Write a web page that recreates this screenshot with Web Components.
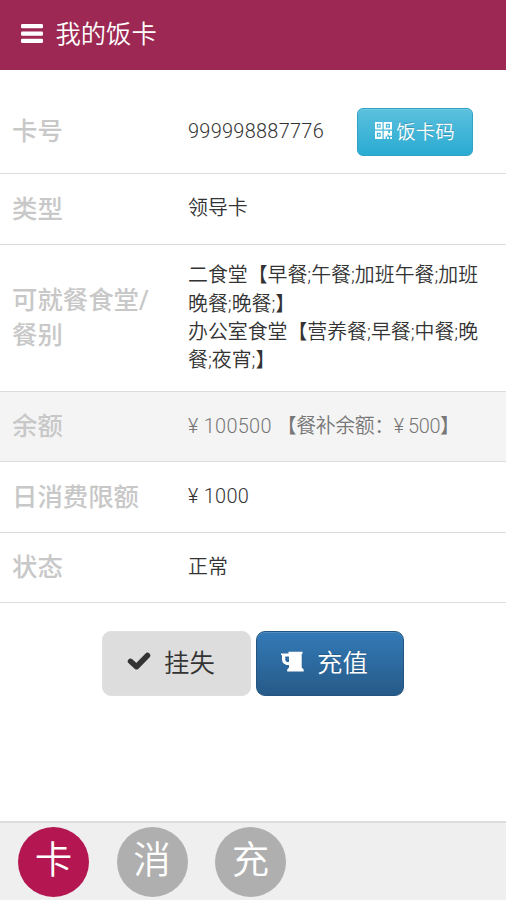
<!DOCTYPE html>
<html lang="zh-CN"><head><meta charset="utf-8"><title>我的饭卡</title>
<style>
html,body{margin:0;height:100%}
body{background:#fff;font-family:Roboto,"Noto Sans CJK SC",sans-serif;font-weight:350;color:#333}
.num{letter-spacing:.3px}
</style></head><body>
<meal-app>
<app-header slot="header">我的饭卡</app-header>
<info-row label="卡号" style="--h:104px;--pt:20px;--vt:2px"><span class="num">999998887776</span><code-button slot="action">饭卡码</code-button></info-row>
<info-row label="类型" style="--h:71px;--vt:1px">领导卡</info-row>
<info-row label="可就餐食堂/<br>餐别" style="--h:147px;--vt:2px">二食堂【早餐;午餐;加班午餐;加班<br>晚餐;晚餐;】<br>办公室食堂【营养餐;早餐;中餐;晚<br>餐;夜宵;】</info-row>
<info-row label="余额" style="--h:70px;--bg:#f4f4f4;--fg:#777"><span class="num">¥ 100500 </span><span style="letter-spacing:-.4px">【餐补余额：¥ 500】</span></info-row>
<info-row label="日消费限额" style="--h:71px;--vt:0px"><span class="num">¥ 1000</span></info-row>
<info-row label="状态" style="--h:70px">正常</info-row>
<action-button slot="actions" kind="plain">挂失</action-button>
<action-button slot="actions" kind="primary">充值</action-button>
<tab-dot slot="tabs" active>卡</tab-dot>
<tab-dot slot="tabs">消</tab-dot>
<tab-dot slot="tabs">充</tab-dot>
</meal-app>
<script>
const define=(name,html)=>customElements.define(name,class extends HTMLElement{
 constructor(){super();this.attachShadow({mode:'open'}).innerHTML=typeof html==='function'?html(this):html;}
});
define('meal-app',`<style>
:host{display:flex;flex-direction:column;height:900px;width:506px;overflow:hidden}
main{flex:1}
.actions{display:flex;gap:5px;padding:28px 0 0 102px}
footer{box-sizing:border-box;height:79px;background:#efefef;border-top:2px solid #ddd;display:flex;gap:27.5px;padding:4px 0 0 18px}
</style><slot name="header"></slot><main><slot></slot><div class="actions"><slot name="actions"></slot></div></main><footer><slot name="tabs"></slot></footer>`);
define('app-header',`<style>
:host{display:flex;align-items:center;box-sizing:border-box;height:70px;background:#9c2853;color:#fff;padding:0 0 3px 21px;gap:12.5px;font-size:25.3px;line-height:36px}
svg{display:block}
span{padding-top:2px}
</style><svg width="22" height="19" viewBox="0 0 22 19" fill="#fff"><rect width="22" height="4.3" rx="1.3"/><rect y="7.4" width="22" height="4.3" rx="1.3"/><rect y="14.7" width="22" height="4.3" rx="1.3"/></svg><span><slot></slot></span>`);
define('info-row',el=>`<style>
:host{display:grid;grid-template-columns:176px 1fr;align-items:center;box-sizing:border-box;height:var(--h);padding:var(--pt,0) 0 0 12px;background:var(--bg,#fff);border-bottom:1.5px solid #dcdcdc}
.label{font-size:25.4px;line-height:35px;font-weight:500;color:#c8c8c8;white-space:nowrap}
.row{display:flex;align-items:center;justify-content:space-between;padding-right:33px}
.value{font-size:19.9px;line-height:28.3px;color:var(--fg,#333);white-space:nowrap;padding-top:var(--vt,1px)}
</style><div class="label">${el.getAttribute('label')}</div><div class="row"><div class="value"><slot></slot></div><slot name="action"></slot></div>`);
define('code-button',`<style>
:host{display:flex;align-items:center;justify-content:center;box-sizing:border-box;width:116px;height:48px;border:1px solid #2fa3c4;border-radius:6px;background:linear-gradient(#5bc0de,#2aabd2);box-shadow:inset 0 1px 0 #ffffff26;color:#fff;font-size:19.5px;gap:4px;text-shadow:0 -1px 0 #0003;padding-bottom:3px;flex:none}
svg{display:block}
</style><svg width="17" height="17" viewBox="0 0 17 17" fill="#fff"><path fill-rule="evenodd" d="M0 0h7.500v7.500H0zM1.800 1.800v3.900h3.900V1.800zM8.700 0H17v7.500H8.700zM10.800 1.800v3.900h4.200V1.800zM0 8.700h7.500V17H0zM1.800 10.700v4h3.900v-4zM8.700 8.700h4.500v2.200H15V8.700h2v5h-3.200v-1.500h-1.300v2.300h-2V17H8.700zM12 15h1.700v2H12zM15.200 15H17v2h-1.800z"/><path d="M3 3h1.500v1.500H3zM12.100 3h1.500v1.500h-1.500zM3 12h1.500v1.500H3z"/></svg><span><slot></slot></span>`);
define('action-button',el=>{const p=el.getAttribute('kind')==='primary';return `<style>
:host{display:flex;align-items:center;box-sizing:border-box;width:${p?148:149}px;height:65px;border-radius:9px;font-size:25.4px;padding:0 0 5px ${p?23:24}px;gap:13px;${p?'color:#fff;border:1px solid #245580;background:linear-gradient(#337ab7,#265a88);box-shadow:inset 0 1px 0 #ffffff26;text-shadow:0 -1px 0 #0003':'color:#333;background:#ddd;border:1px solid #dfdfdf'}}
</style>${p?'<svg width="24" height="21" viewBox="0 0 24 21" fill="#fff"><path fill-rule="evenodd" d="M1 2.500h7.500V.800h14V2.800h-.800V16.500l2 2V20.500H7.200v-2L9 16.500v-2.500H6.500Q2 12.500 2 8.500V4.500L1 3.800zM5.200 5.500V8.500Q5.500 10.500 7 11H9V5.500z"/></svg>':'<svg width="24" height="20" viewBox="0 0 24 20"><path d="M3.500 10.300 9.500 15.700 20.500 4.500" fill="none" stroke="#333" stroke-width="5.500" stroke-linejoin="round" stroke-linecap="round"/></svg>'}<span><slot></slot></span>`});
define('tab-dot',el=>`<style>
:host{display:flex;align-items:center;justify-content:center;box-sizing:border-box;width:71px;height:70px;border-radius:50%;background:${el.hasAttribute('active')?'#b31650':'#afafaf'};color:#fff;font-size:37.5px;line-height:50px;padding-bottom:5px;flex:none}
</style><span><slot></slot></span>`);
</script></body></html>
